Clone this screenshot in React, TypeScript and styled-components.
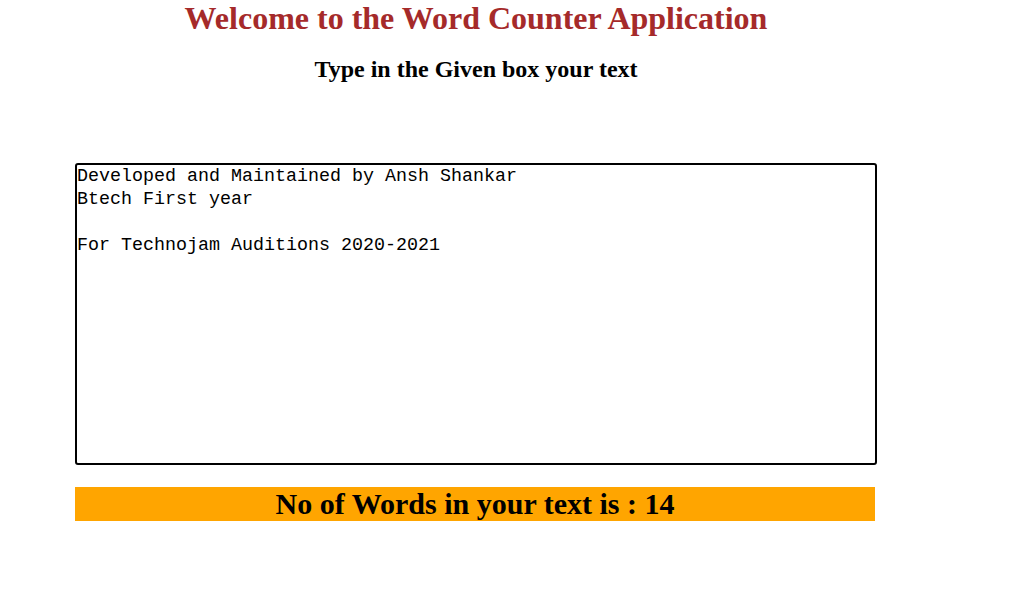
import React, { useState } from 'react';
import styled, { createGlobalStyle } from 'styled-components';

const GlobalStyle = createGlobalStyle`
  html, body {
    margin: 0;
    padding: 0;
    background: #ffffff;
    font-family: "Liberation Serif", "Times New Roman", serif;
  }
`;

const Page = styled.div`
  width: 802px;
  margin-left: 75px;
  display: flex;
  flex-direction: column;
`;

const Title = styled.h1`
  margin: 0;
  text-align: center;
  color: #a52a2a;
  font-size: 32px;
  font-weight: bold;
  line-height: 37px;
`;

const Subtitle = styled.h2`
  margin: 18px 0 0;
  text-align: center;
  color: #000;
  font-size: 24px;
  font-weight: bold;
  line-height: 28px;
`;

const TextBox = styled.textarea`
  margin-top: 80px;
  width: 802px;
  height: 302px;
  box-sizing: border-box;
  border: 2px solid #000;
  border-radius: 3px;
  padding: 0;
  resize: none;
  outline: none;
  font-family: "Liberation Mono", "DejaVu Sans Mono", monospace;
  font-size: 18.33px;
  line-height: 23px;
  color: #000;
`;

const CountBar = styled.div`
  margin-top: 22px;
  width: 800px;
  height: 34px;
  background: #ffa500;
  display: flex;
  align-items: center;
  justify-content: center;
  font-size: 30px;
  font-weight: bold;
  color: #000;
`;

const initial = `Developed and Maintained by Ansh Shankar
Btech First year

For Technojam Auditions 2020-2021`;

export default function App() {
  const [text, setText] = useState(initial);
  // counts pieces between spaces and line breaks, like the original
  const count = text.length ? text.split(/[ \n]/).length : 0;

  return (
    <>
      <GlobalStyle />
      <Page>
        <Title>Welcome to the Word Counter Application</Title>
        <Subtitle>Type in the Given box your text</Subtitle>
        <TextBox value={text} onChange={e => setText(e.target.value)} />
        <CountBar>No of Words in your text is : {count}</CountBar>
      </Page>
    </>
  );
}
